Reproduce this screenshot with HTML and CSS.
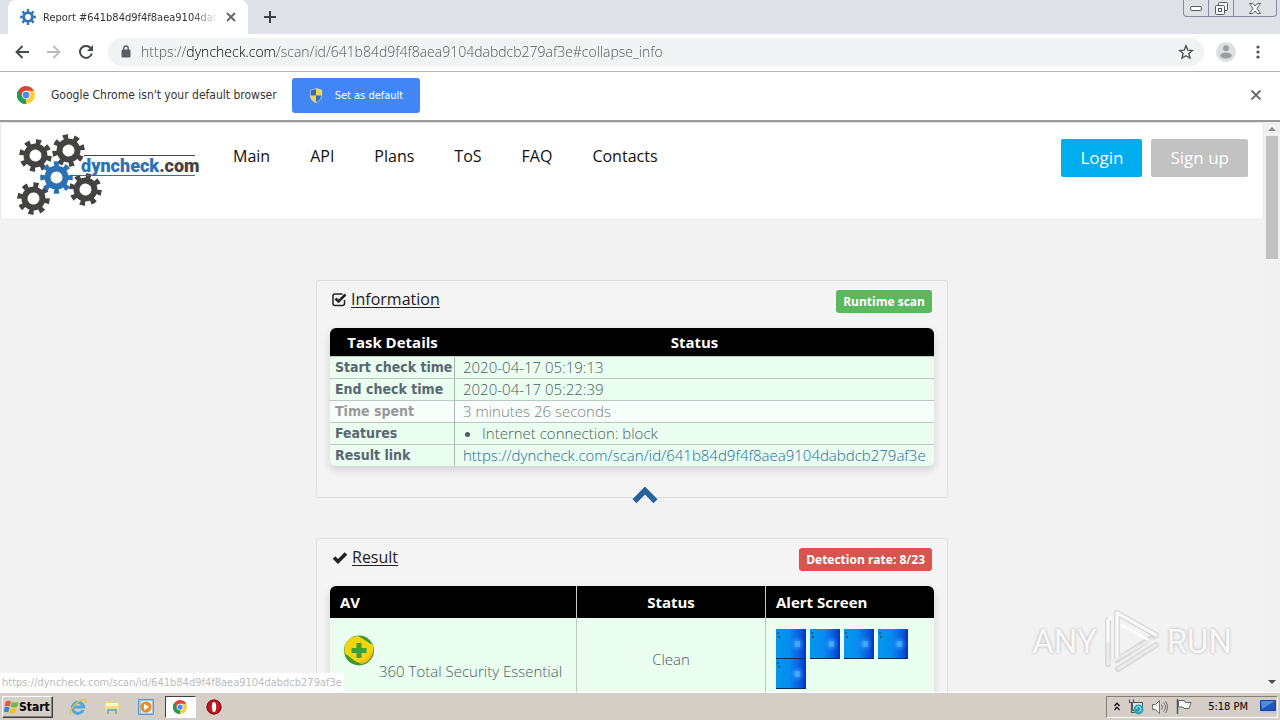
FILE: index.html
```html
<!DOCTYPE html>
<html lang="en">
<head>
<meta charset="utf-8">
<title>Report #641b84d9f4f8aea9104dabdcb279af3e</title>
<link rel="stylesheet" href="styles.css">
</head>
<body>
<svg class="defs" aria-hidden="true">
  <defs>
    <symbol id="gear" viewBox="0 0 32 32">
      <circle cx="16" cy="16" r="8.700" fill="none" stroke="currentColor" stroke-width="5.800"/>
      <circle cx="16" cy="16" r="13.300" fill="none" stroke="currentColor" stroke-width="5" pathLength="16" stroke-dasharray=".96 1.04" stroke-dashoffset=".48"/>
    </symbol>
    <symbol id="chrome" viewBox="0 0 16 16">
      <path d="M8 8 1.1 4A8 8 0 0 1 14.9 4z" fill="#dd4236"/>
      <path d="M8 8 14.9 4A8 8 0 0 1 8 16z" fill="#fdcd3b"/>
      <path d="M8 8v8A8 8 0 0 1 1.1 4z" fill="#1f9d58"/>
      <path d="M8 4h6.9L11.5 10z" fill="#fdcd3b"/>
      <path d="M8 4h6.9a8 8 0 0 0-1-1.4z" fill="#dd4236"/>
      <path d="M4.5 10 1.1 4 8 4z" fill="#dd4236"/>
      <path d="M1.1 4 4.5 10 8 12 7 16A8 8 0 0 1 1.1 4z" fill="#1f9d58"/>
      <circle cx="8" cy="8" r="3.8" fill="#fff"/>
      <circle cx="8" cy="8" r="3" fill="#4a8af4"/>
    </symbol>
    <linearGradient id="sky" x1="0" x2="1" y1="0" y2="0">
      <stop offset="0" stop-color="#0298ec"/><stop offset=".45" stop-color="#068cf0"/><stop offset=".8" stop-color="#0c5ae0"/><stop offset="1" stop-color="#0733b8"/>
    </linearGradient>
    <radialGradient id="glow"><stop offset="0" stop-color="#48b4ff"/><stop offset="1" stop-color="#1480f0" stop-opacity="0"/></radialGradient>
    <symbol id="shot" viewBox="0 0 30 30">
      <path d="M0 0h30v30H0z" fill="url(#sky)"/>
      <circle cx="21" cy="15" r="8" fill="url(#glow)"/>
      <path d="M19 12h5v6h-5z" fill="#52b6ff" opacity=".5"/>
      <path d="M1 3h2v2H1zM2 7h2v2H2z" fill="#2c5a78"/>
      <path d="M0 29h30v1H0z" fill="#052a60"/>
    </symbol>
  </defs>
</svg>

<header class="tabstrip">
  <div class="tab">
    <svg class="favicon" viewBox="0 0 16 16"><use href="#gear" width="16" height="16"/></svg>
    <span class="tab-title">Report #641b84d9f4f8aea9104dabdcb279af3e</span>
    <button class="icon-button tab-close" aria-label="Close tab"><svg width="10" height="10" viewBox="0 0 10 10"><path d="M1 1l8 8M9 1l-8 8" stroke="#5f6368" stroke-width="1.8"/></svg></button>
  </div>
  <button class="icon-button new-tab" aria-label="New tab"><svg width="12" height="12" viewBox="0 0 12 12"><path d="M6 0v12M0 6h12" stroke="#3c4043" stroke-width="2"/></svg></button>
  <div class="window-buttons">
    <button aria-label="Minimize"><svg width="12" height="5" viewBox="0 0 12 5"><rect x=".5" y=".5" width="11" height="4" rx="1.5" fill="#fff" stroke="#555b66"/></svg></button>
    <button aria-label="Restore"><svg width="13" height="13" viewBox="0 0 13 13" fill="#f4f5f7" stroke="#555b66"><rect x="3.5" y=".5" width="9" height="8" rx="1"/><rect x=".5" y="3.500" width="9" height="9" rx="1"/><rect x="3.500" y="6.500" width="3" height="3"/></svg></button>
    <button class="wide" aria-label="Close"><svg width="12" height="11" viewBox="0 0 12 11"><path d="M.5.5h3.200L6 3 8.300.5h3.200L8 5.500l3.500 5H8.300L6 8 3.700 10.500H.5L4 5.500z" fill="#fff" stroke="#555b66"/></svg></button>
  </div>
</header>

<div class="toolbar">
  <button class="icon-button" aria-label="Back"><svg width="14" height="14" viewBox="0 0 14 14" fill="none" stroke="#46494d" stroke-width="1.900"><path d="M14 7H1.500M7.500 1l-6 6 6 6"/></svg></button>
  <button class="icon-button" aria-label="Forward"><svg width="14" height="14" viewBox="0 0 14 14" fill="none" stroke="#b9bbbe" stroke-width="1.900"><path d="M0 7h12.500M6.500 1l6 6-6 6"/></svg></button>
  <button class="icon-button" aria-label="Reload"><svg width="14" height="14" viewBox="0 0 14 14"><path d="M11.600 3A6 6 0 1 0 12.800 8.500" fill="none" stroke="#46494d" stroke-width="2"/><path d="M14 0v6H8z" fill="#46494d"/></svg></button>
  <div class="omnibox">
    <svg width="10" height="13" viewBox="0 0 10 13"><path d="M1.500 4.500h7A1.200 1.200 0 0 1 9.500 5.700v5.600a1.200 1.200 0 0 1-1.200 1.200H1.700A1.200 1.200 0 0 1 .5 11.300V5.700z" fill="#5a5e63"/><path d="M2.800 5V3.200a2.200 2.200 0 0 1 4.400 0V5" fill="none" stroke="#5a5e63" stroke-width="1.400"/></svg>
    <input class="url" type="text" aria-label="Address" value="https://dyncheck.com/scan/id/641b84d9f4f8aea9104dabdcb279af3e#collapse_info">
    <button class="icon-button" aria-label="Bookmark"><svg width="16" height="16" viewBox="0 0 16 16"><path d="M8 1.800l1.800 4.300 4.600.4-3.500 3 1.100 4.600L8 11.700l-4 2.400 1.100-4.600-3.500-3 4.600-.4z" fill="none" stroke="#505357" stroke-width="1.400"/></svg></button>
  </div>
  <button class="icon-button" aria-label="Profile"><svg width="20" height="20" viewBox="0 0 20 20"><circle cx="10" cy="10" r="10" fill="#dedfe0"/><circle cx="10" cy="6.200" r="2.900" fill="#9b9d9f"/><ellipse cx="10" cy="13.500" rx="5.800" ry="3" fill="#9b9d9f"/></svg></button>
  <button class="icon-button menu" aria-label="Menu"><svg width="4" height="14" viewBox="0 0 4 14" fill="#4d5054"><circle cx="2" cy="2" r="1.600"/><circle cx="2" cy="7" r="1.600"/><circle cx="2" cy="12" r="1.600"/></svg></button>
</div>

<div class="infobar">
  <svg width="18" height="18"><use href="#chrome" width="18" height="18"/></svg>
  <span class="infobar-text">Google Chrome isn't your default browser</span>
  <button class="default-button"><svg width="14" height="15" viewBox="0 0 14 15"><path d="M7 0 1 2v5c0 4 3 6.500 6 8z" fill="#2f6cbf"/><path d="M7 0l6 2v5c0 4-3 6.500-6 8z" fill="#f5d34a"/><path d="M7 7.500H1C1.200 11.300 4.200 13.700 7 15z" fill="#f5d34a"/><path d="M7 7.500h6c-.2 3.800-3.200 6.200-6 7.500z" fill="#2f6cbf"/><path d="M7 .5 1.300 2.300V7c0 4 2.900 6.200 5.700 7.600C9.800 13.200 12.700 11 12.700 7V2.300z" fill="none" stroke="#c9d3dd" stroke-width=".8"/></svg>Set as default</button>
  <button class="icon-button infobar-close" aria-label="Dismiss"><svg width="10" height="10" viewBox="0 0 10 10"><path d="M.5.5l9 9M9.500.5l-9 9" stroke="#606368" stroke-width="1.900"/></svg></button>
</div>

<div class="viewport">
  <div class="page">
    <div class="site-header">
      <a class="logo" href="#" aria-label="dyncheck.com"><svg width="178" height="84" viewBox="0 0 178 84">
        <g color="#454341">
          <use href="#gear" x="1" y="5" width="33" height="33" transform="rotate(12 17.500 21.500)"/>
          <use href="#gear" x="34" y="0" width="33" height="33" transform="rotate(-12 50.500 16.500)"/>
          <use href="#gear" x="-1" y="48" width="33" height="33" transform="rotate(10 15.500 64.500)"/>
          <use href="#gear" x="51" y="39" width="33" height="33" transform="rotate(12 67.500 55.500)"/>
        </g>
        <use href="#gear" x="22" y="27" width="33" height="33" color="#2b72b5"/>
        <path d="M66 21.500h111" stroke="#454545"/>
        <path d="M53 41.500h124" stroke="#2b72b5"/>
        <text class="logo-text" x="63" y="38"><tspan fill="#2b72b5">dyncheck</tspan><tspan fill="#454341">.com</tspan></text>
      </svg></a>
      <nav class="site-nav">
        <a href="#">Main</a><a href="#">API</a><a href="#">Plans</a><a href="#">ToS</a><a href="#">FAQ</a><a href="#">Contacts</a>
      </nav>
      <div class="account">
        <button class="login">Login</button>
        <button class="signup">Sign up</button>
      </div>
    </div>

    <main class="content">
      <section class="card info-card">
        <div class="card-head">
          <h2><svg width="15" height="15" viewBox="0 0 15 15" fill="none" stroke="#222"><path d="M12.500 8v3.500a2 2 0 0 1-2 2h-7.500a2 2 0 0 1-2-2V4a2 2 0 0 1 2-2h7.500" stroke-width="1.500"/><path d="M3.500 6.500l3 3 7-7" stroke-width="2.600"/></svg><a href="#collapse_info">Information</a></h2>
          <span class="badge green">Runtime scan</span>
        </div>
        <table class="details">
          <thead><tr><th class="label-col">Task Details</th><th>Status</th></tr></thead>
          <tbody>
            <tr><th>Start check time</th><td>2020-04-17 05:19:13</td></tr>
            <tr><th>End check time</th><td>2020-04-17 05:22:39</td></tr>
            <tr class="hover"><th>Time spent</th><td>3 minutes 26 seconds</td></tr>
            <tr><th>Features</th><td><ul><li>Internet connection: block</li></ul></td></tr>
            <tr><th>Result link</th><td><a href="#">https://dyncheck.com/scan/id/641b84d9f4f8aea9104dabdcb279af3e</a></td></tr>
          </tbody>
        </table>
        <button class="collapse" aria-label="Collapse"><svg width="26" height="18" viewBox="0 0 26 18"><path d="M2.500 15.200 13 4.500l10.500 10.700" fill="none" stroke="#28629c" stroke-width="5.600"/></svg></button>
      </section>

      <section class="card">
        <div class="card-head">
          <h2><svg width="16" height="15" viewBox="0 0 16 15"><path d="M2 7.500l4 4L14 3.500" fill="none" stroke="#222" stroke-width="3.600"/></svg><a href="#collapse_result">Result</a></h2>
          <span class="badge red">Detection rate: 8/23</span>
        </div>
        <table class="results">
          <thead><tr><th class="av-col">AV</th><th class="status-col">Status</th><th>Alert Screen</th></tr></thead>
          <tbody><tr>
            <td><div class="av"><svg width="30" height="31" viewBox="0 0 30 31"><circle cx="15" cy="15.500" r="15" fill="#3f9a2c"/><path d="M1 19A14 14 0 0 1 13 1c5 1 11 7 16 9 1 5 0 11-5 16-4 3-7 3-11 1C8 25 5 20 1 19z" fill="#f2d510"/><path d="M17 29c7-2 12-7 12-15-2 6-8 12-14 12z" fill="#f8b91a"/><path d="M12.500 8h5v5h5v5h-5v5h-5v-5h-5v-5h5z" fill="#4a9c28"/></svg><span>360 Total Security Essential</span></div></td>
            <td class="status">Clean</td>
            <td><div class="shots"><svg><use href="#shot"/></svg><svg><use href="#shot"/></svg><svg><use href="#shot"/></svg><svg><use href="#shot"/></svg><svg><use href="#shot"/></svg></div></td>
          </tr></tbody>
        </table>
      </section>
    </main>
  </div>
  <div class="scrollbar">
    <svg width="8" height="4" viewBox="0 0 8 4"><path d="M0 4l4-4 4 4z" fill="#8f8f8f"/></svg>
    <div class="thumb"></div>
    <svg width="8" height="4" viewBox="0 0 8 4"><path d="M0 0l4 4 4-4z" fill="#4a4a4a"/></svg>
  </div>
  <div class="link-status">https://dyncheck.com/scan/id/641b84d9f4f8aea9104dabdcb279af3e</div>
  <div class="watermark">
    <span>ANY</span>
    <svg width="58" height="66" viewBox="0 0 58 66" fill="none" stroke-linejoin="round" stroke-linecap="round"><g stroke="#d8d8d8" stroke-width="6"><path d="M14 49V5l39 22-39 25"/><path d="M5 12v44M15 61 53 37"/></g><g stroke="#fcfcfc" stroke-width="3"><path d="M14 49V5l39 22M19 17l30 17"/><path d="M5 35V12l3-2"/></g><g stroke="#ebebeb" stroke-width="3"><path d="M5 35v21L49 31"/><path d="M15 61 53 37"/></g></svg>
    <span>RUN</span>
  </div>
</div>

<footer class="taskbar">
  <button class="start"><svg width="15" height="14" viewBox="0 0 15 14"><path d="M2 1.500c2-1 3.500-.8 5 .2L5.700 6.500c-1.500-1-3-1-5-.2z" fill="#e8562a"/><path d="M8 2c2 1 4 1 6.500 0L13.200 6.700c-2 1-4 1-6.300 0z" fill="#6fb63c"/><path d="M.5 7.500c2-1 3.500-.8 5 .2L4.200 12.500c-1.500-1-2.500-1-4.200-.3z" fill="#3f7fd6"/><path d="M6.500 8c2 1 4 1 6.300 0l-1.300 4.700c-2 1-4 1-6.300 0z" fill="#f5bf2e"/></svg>Start</button>
  <div class="launchers">
    <button aria-label="Internet Explorer"><svg width="18" height="18" viewBox="0 0 18 18"><path d="M14.200 12A5.600 5.600 0 1 1 14.600 9H5" fill="none" stroke="#4aa8e4" stroke-width="3"/><path d="M1.500 16C0 12 9 1 16.500 1.500c1.500 1 0 3.500 0 3.500" fill="none" stroke="#e5c044" stroke-width="1.300"/></svg></button>
    <button aria-label="Explorer"><svg width="18" height="18" viewBox="0 0 18 18"><path d="M2 3h6l1 2h7v10H2z" fill="#efd774"/><path d="M3 5h12v4H3z" fill="#fdf7cf"/><path d="M2 8h14v5H2z" fill="#f3dd83"/><path d="M4 16v-5h10v5h-2v-3H6v3z" fill="#68b4de"/></svg></button>
    <button aria-label="Media Player"><svg width="16" height="16" viewBox="0 0 16 16"><path d="M.5.5h15v15H.5z" fill="#9ccbf0" stroke="#5f94c8"/><path d="M3 2h11v12H3z" fill="#d8ecfa"/><circle cx="8" cy="8" r="5.500" fill="#f28a1e"/><path d="M6 4.800v6.400L11.200 8z" fill="#fff"/></svg></button>
    <button class="running" aria-label="Chrome"><svg width="14" height="14"><use href="#chrome" width="14" height="14"/></svg></button>
    <button aria-label="Opera"><svg width="16" height="16" viewBox="0 0 16 16"><circle cx="8" cy="8" r="7.500" fill="#c0161c"/><circle cx="8" cy="8" r="7" fill="none" stroke="#7e0c12"/><ellipse cx="8" cy="8" rx="2.200" ry="5" fill="#fff"/></svg></button>
  </div>
  <div class="tray">
    <svg width="6" height="9" viewBox="0 0 6 9" fill="none" stroke="#000" stroke-width="1.200"><path d="M.5 4 3 1.200 5.500 4M.5 8 3 5.200 5.500 8"/></svg>
    <svg width="16" height="16" viewBox="0 0 16 16"><path d="M4.500 3.500h10v8h-10z" fill="#d7e4ea" stroke="#555"/><path d="M1.500.5v3h4v-3M3.500 4v9.500h5" fill="none" stroke="#555" stroke-width="1.200"/><circle cx="10.500" cy="10.500" r="5" fill="#2fa3b4"/><path d="M8 10a2.500 2.500 0 1 1 2.500 2.500" fill="none" stroke="#a6e4e8"/></svg>
    <svg width="16" height="14" viewBox="0 0 16 14" fill="none" stroke="#6d6d6d"><path d="M.5 4.500h3l4-4v13l-4-4h-3z" fill="#f5f5f5"/><path d="M9.500 4.500q2 2.500 0 5M11.500 2.500q4 4.500 0 9M13.500 1q4 6 0 12"/></svg>
    <svg width="16" height="15" viewBox="0 0 16 15"><path d="M1.500 0v15" stroke="#555" stroke-width="1.500"/><path d="M2.500 1.500h6l1 2h5.500l-2 6H8l-1-1.500H2.500z" fill="#fafafa" stroke="#666"/></svg>
    <time>5:18 PM</time>
    <svg width="16" height="13" viewBox="0 0 16 13"><path d="M.5.5h15v10H.5z" fill="#1f55bf" stroke="#20438f"/><path d="M1 1h14L2 9z" fill="#4f8ce8"/><path d="M0 11h16v2H0z" fill="#b8c4d8"/></svg>
  </div>
</footer>
</body>
</html>
```
FILE: styles.css
```css
* { box-sizing: border-box; }
body {
  margin: 0;
  height: 100vh;
  display: flex;
  flex-direction: column;
  overflow: hidden;
  font-family: "Open Sans", sans-serif;
  color: #222;
}
button { font: inherit; border: 0; margin: 0; padding: 0; background: none; color: inherit; }
svg { display: block; flex: none; }
.defs { position: absolute; width: 0; height: 0; }
.icon-button { display: flex; align-items: center; justify-content: center; }

.tabstrip { display: flex; flex: none; height: 34px; padding-left: 8px; background: #dee1e6; }
.tab {
  display: flex; align-items: center; width: 240px; padding: 0 12px;
  background: #fff; border-radius: 8px 8px 0 0;
}
.favicon { width: 16px; height: 16px; margin-right: 7px; color: #2f74b0; }
.tab-title {
  flex: 1; overflow: hidden; white-space: nowrap;
  font: 11px "DejaVu Sans Condensed", "DejaVu Sans", sans-serif; color: #333;
  -webkit-mask-image: linear-gradient(90deg, #000 85%, transparent);
  mask-image: linear-gradient(90deg, #000 85%, transparent);
}
.tab-close { margin-left: 8px; }
.new-tab { margin-left: 16px; }
.window-buttons {
  display: flex; height: 17px; margin-left: auto; margin-right: 3px;
  border: 1px solid #858b98; border-top: 0; border-radius: 0 0 4px 4px;
}
.window-buttons button { display: flex; align-items: center; justify-content: center; width: 25px; border-right: 1px solid #858b98; }
.window-buttons .wide { width: 42px; border-right: 0; }

.toolbar {
  display: flex; flex: none; align-items: center; gap: 18px; height: 38px;
  padding: 0 20px 2px 15px; border-bottom: 1px solid #b1b3b5; background: #fff;
}
.omnibox {
  display: flex; flex: 1; align-items: center; height: 28px; margin: 0 -6px 0 -3px; padding: 0 10px 0 13px;
  border-radius: 14px; background: #f1f3f4;
}
.menu { margin-left: 2px; }
.url {
  flex: 1; min-width: 0; margin-left: 10px; padding: 0; border: 0; outline: 0;
  font: 300 14px "Open Sans", sans-serif; color: transparent;
  background: linear-gradient(90deg, #4c5055 46px, #000 46px, #000 136px, #4c5055 136px);
  -webkit-background-clip: text; background-clip: text;
}

.infobar {
  display: flex; flex: none; align-items: center; height: 50px; padding: 0 19px 2px 17px;
  background: #fff; border-bottom: 2px solid #98989b;
}
.infobar-text { margin-left: 16px; font: 12px "DejaVu Sans Condensed", sans-serif; color: #333; }
.default-button {
  display: flex; align-items: center; gap: 12px; height: 35px; margin-left: 15px; padding: 0 17px;
  border-radius: 3px; background: #4285f4; color: #fff; font: 11px "DejaVu Sans Condensed", sans-serif;
}
.infobar-close { margin-left: auto; }

.viewport { position: relative; display: flex; flex: 1; min-height: 0; overflow: hidden; background: #f2f2f2; }
.page { flex: 1; min-width: 0; overflow: hidden; }
.site-header {
  display: flex; align-items: flex-start; height: 98px; padding: 11px 15px 0 17px;
  border: 1px solid #e7e7e7; border-radius: 4px; background: #fff;
}
.logo svg { overflow: visible; }
.logo-text { font: 900 18px Roboto, "Liberation Sans", sans-serif; }
.site-nav { display: flex; gap: 40px; margin: 10px 0 0 37px; font-size: 16px; line-height: 24px; }
.site-nav a { color: #111; text-decoration: none; }
.account { display: flex; gap: 9px; margin: 5px 0 0 auto; }
.account button { height: 38px; padding: 0 19px 2px; border-radius: 2px; color: #fff; font-size: 17px; }
.login { background: #00aeef; }
.signup { background: #c2c2c2; }

.content { display: flex; flex-direction: column; gap: 40px; width: 632px; max-width: 100%; margin: 60px auto 0; }
.card { position: relative; padding: 9px 13px 31px; border: 1px solid #dddddd; border-radius: 3px; background: #f4f4f4; }
.card-head { display: flex; justify-content: space-between; align-items: flex-start; height: 38px; padding: 0 2px; }
.card h2 { display: flex; align-items: center; gap: 4px; margin: 0; font-size: 16px; font-weight: 400; line-height: 18px; }
.card h2 a { color: #222; text-underline-offset: 2px; text-decoration-thickness: 1px; }
.badge { padding: 0 7px; border-radius: 3px; color: #fff; font-size: 12px; font-weight: 700; line-height: 23px; }
.green { background: #5cb85c; }
.red { background: #d9534f; }

table { width: 100%; border-spacing: 0; table-layout: fixed; border-radius: 6px; overflow: hidden; background: #eafff0; box-shadow: 0 4px 8px rgba(0, 0, 0, .14); }
thead th { padding: 0; background: #000; color: #fff; font-size: 15px; font-weight: 700; }
td { padding: 0; color: #4c5864; font-size: 15px; font-weight: 300; }
.details thead th { height: 28px; }
.label-col { width: 125px; }
.details tbody th, .details tbody td { height: 22px; line-height: 21px; border-top: 1px solid #b9c9bf; white-space: nowrap; }
.details tbody th { padding: 0 0 0 5px; border-right: 1px solid #a9b7b0; text-align: left; color: #5a6672; font: bold 14px/21px "DejaVu Sans Condensed", sans-serif; }
.details tbody td { padding-left: 8px; }
.details td a { color: #23699f; text-decoration: none; }
.details .hover th, .details .hover td { background: #f8fffa; color: #999; }
.details .hover td { color: #808080; }
.details ul { margin: 0; padding-left: 19px; }
.collapse { position: absolute; left: 50%; bottom: -7px; }

.av-col { width: 246px; }
.status-col { width: 189px; }
.results thead th { height: 32px; }
.results .av-col, .results thead th:last-child { padding-left: 10px; text-align: left; }
.results thead th + th { border-left: 1px solid #ccc; }
.results tbody td { height: 81px; padding: 11px 10px 10px; vertical-align: top; }
.results tbody td + td { border-left: 1px solid #b9c9bf; }
.results tbody .status { vertical-align: middle; text-align: center; }
.av { display: flex; align-items: flex-end; gap: 5px; padding: 6px 0 0 4px; line-height: 20px; white-space: nowrap; }
.av svg { margin-bottom: 15px; }
.shots { display: flex; flex-wrap: wrap; column-gap: 4px; }
.shots svg { width: 30px; height: 30px; }

.scrollbar { display: flex; flex-direction: column; align-items: center; flex: none; width: 16px; padding: 5px 0 8px; background: #f1f1f1; }
.thumb { width: 12px; height: 123px; margin: 5px 0 auto; background: #c1c1c1; }
.link-status {
  position: absolute; left: 0; bottom: 0; padding: 0 2px; border-top-right-radius: 3px; background: #fff;
  color: #bbb; font: 11px/19px "DejaVu Sans Condensed", sans-serif;
}
.watermark {
  position: absolute; right: 48px; bottom: 18px; display: flex; align-items: center; gap: 6px;
  color: #f8f8f8; font: 33px Roboto, sans-serif; text-shadow: 0 0 3px #aaa;
}

.taskbar { display: flex; flex: none; align-items: center; height: 28px; padding: 1px 2px; background: #d4cec6; border-top: 1px solid #fff; box-shadow: 0 -1px #c9c5ba; }
.start {
  display: flex; align-items: center; height: 22px; padding: 0 2px 0 1px; color: #000;
  border: 1px solid; border-color: #fff #404040 #404040 #fff; box-shadow: inset -1px -1px #858079;
  font: bold 12px "DejaVu Sans Condensed", sans-serif;
}
.launchers { display: flex; align-items: center; gap: 3px; margin-left: 10px; }
.launchers button { display: flex; align-items: center; justify-content: center; width: 31px; height: 22px; }
.launchers .running { background: #fff; border: 1px solid; border-color: #404040 #fff #fff #404040; }
.tray { display: flex; align-items: center; height: 22px; gap: 8px; margin-left: auto; padding: 0 1px 0 7px; border: 1px solid; border-color: #858079 #fff #fff #858079; }
.tray time { margin: 0 4px 0 8px; color: #000; font: 11px "DejaVu Sans Condensed", sans-serif; }
```
